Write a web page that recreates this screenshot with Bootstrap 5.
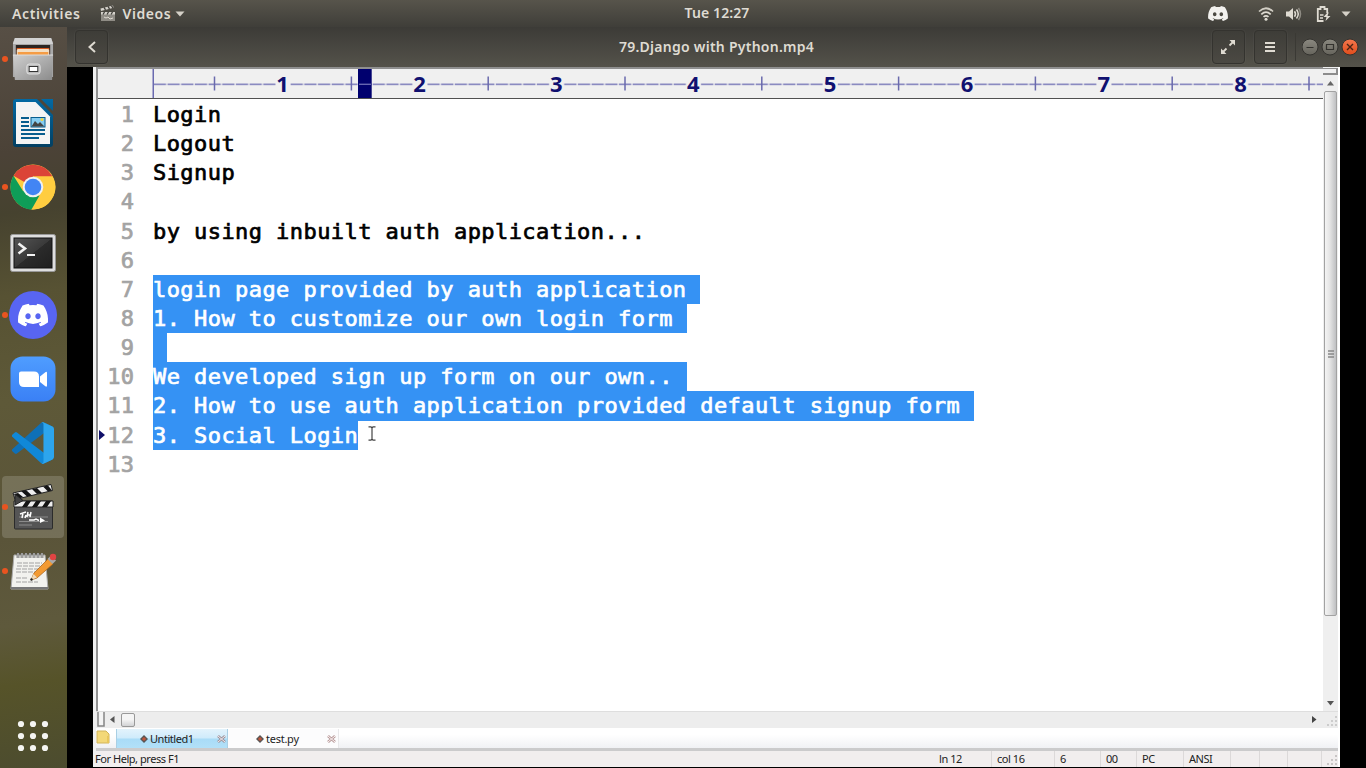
<!DOCTYPE html>
<html lang="en">
<head>
<meta charset="utf-8">
<meta name="viewport" content="width=device-width, initial-scale=1">
<title>Videos</title>
<link href="https://cdn.jsdelivr.net/npm/bootstrap@5.3.0/dist/css/bootstrap.min.css" rel="stylesheet">
<style>
body{font-family:"Noto Sans","Open Sans",sans-serif;background:#000;height:768px}
svg{display:block}
.topbar{height:27px;background:linear-gradient(#57544b,#3f3e39);color:#dfdbd2;font-size:14px;font-weight:600;line-height:27px}
.topbar .side{flex:1 1 0}
.topbar .wide{letter-spacing:.6px}
.topbar .clock{letter-spacing:.1px;padding-left:68px;line-height:26px}
.topbar .side:last-child{margin-left:0}
.dock{width:67px;background:linear-gradient(172deg,#574f45 0,#4b4237 17%,#46422f 25%,#575233 36%,#5e5938 50%,#5a5439 68%,#5e593c 80%,#565329 88%,#4c4c2f 100%)}
.dock-item{height:64px;width:67px;padding-right:2px}
.dock-item.running::before{content:"";position:absolute;left:2px;top:50%;width:6px;height:6px;margin-top:-3px;border-radius:50%;background:#e95420}
.dock-item.current .tile{background:rgba(255,255,255,.16);border-radius:4px}
.tile{width:62px;height:62px}
.headbar{height:40px;background:linear-gradient(#3c3b37,#54524a);color:#dfdbd2;font-size:14px;font-weight:600}
.head-title{letter-spacing:.26px;padding-bottom:1px}
.head-btn{width:33px;height:34px;padding:0;border:1px solid #34332f;border-radius:4px;background:linear-gradient(#3e3d38,#4b4943);box-shadow:0 0 0 1px rgba(255,255,255,.03)}
.head-sep{width:1px;height:28px;background:#3a3934}
.video{padding:0 26px 1px}
.editor{background:#fff;border-left:3px solid #f0f0f0;border-right:2px solid #fff}
.pane{border-left:2px solid #929292;border-top:2px solid #8f8f8f}
.ruler{height:30px;background:#f0f0f0;border-bottom:1px solid #505050}
.code{font-family:"DejaVu Sans Mono","Liberation Mono",monospace;font-size:22px;letter-spacing:.435px;-webkit-text-stroke:.7px;color:#000;padding-top:1px}
.code-line{height:29.15px;line-height:30.6px;white-space:pre}
.gutter{width:36.5px;margin-right:18.5px;text-align:right;color:#a3a3a3}
.sel{background:#3592f4;color:#fff;height:29.5px}
.vbar{width:15px;background:#efefef}
.splitter{height:7px;border:1px solid #8c8c8c;border-width:1px 2px 2px 0;background:#f0f0f0}
.vthumb{height:525px;margin-left:1px;width:13px;border:1px solid #a2a2a2;border-radius:2px;background:linear-gradient(90deg,#f4f4f4,#e4e4e4 45%,#bfc0c2)}
.hbar{height:18px;background:linear-gradient(#ededed 16px,#fff 16px);border-top:1px solid #dedede;padding-bottom:2px}
.hthumb{width:14px;height:14px;border:1px solid #999;border-radius:2px;background:linear-gradient(#f5f5f5 45%,#d2d3d5)}
.tabs{height:19px;background:linear-gradient(#fff 30%,#f0f1f4);font-size:11px;color:#222;line-height:19px}
.tab-a{width:112px;border:1px solid #a9cfe4;border-width:0 1px;background:linear-gradient(#e3f3fc 0,#cfebfb 48%,#a9dcf7 52%,#b2e0f8)}
.tab-b{width:111px;border-right:1px solid #e8e8ea;background:#fcfcfd}
.status{height:19px;border-top:3px solid #cbcbcc;background:#f1eeee;font-size:11px;line-height:16px;color:#222}
.status .cell{border-right:1px solid #dcd9d9;padding-left:5px;white-space:nowrap}
.snug{letter-spacing:-.45px}
.ibeam{left:270px;top:357px}
.rowmark{left:1px;top:361px}
</style>
</head>
<body class="d-flex flex-column overflow-hidden m-0">
<svg width="0" height="0" class="position-absolute" aria-hidden="true">
<defs>
<symbol id="discord" viewBox="0 0 127 96"><path d="M107.700 8.070A105.150 105.150 0 0 0 81.470 0a72.060 72.060 0 0 0-3.360 6.830 97.680 97.680 0 0 0-29.110 0A72.370 72.370 0 0 0 45.640 0a105.890 105.890 0 0 0-26.250 8.090C2.790 32.650-1.710 56.600.540 80.210a105.730 105.730 0 0 0 32.170 16.150 77.700 77.700 0 0 0 6.890-11.110 68.420 68.420 0 0 1-10.850-5.180c.910-.660 1.800-1.340 2.660-2a75.570 75.570 0 0 0 64.320 0c.870.710 1.760 1.390 2.660 2a68.680 68.680 0 0 1-10.870 5.190 77 77 0 0 0 6.890 11.100 105.250 105.250 0 0 0 32.190-16.140c2.640-27.380-4.510-51.110-18.900-72.150ZM42.450 65.690C36.180 65.690 31 60 31 53s5-12.740 11.430-12.740S54 46 53.890 53s-5.050 12.690-11.440 12.690Zm42.240 0C78.410 65.690 73.250 60 73.250 53s5-12.740 11.440-12.740S96.230 46 96.120 53s-5.040 12.690-11.430 12.690Z"/></symbol>
<linearGradient id="steel" x1="0" y1="0" x2="1" y2="1"><stop offset="0" stop-color="#cfcfcf"/><stop offset="1" stop-color="#8b8b8b"/></linearGradient>
<linearGradient id="term" x1="0" y1="0" x2="1" y2="1"><stop offset="0" stop-color="#555"/><stop offset=".5" stop-color="#3a3a3a"/><stop offset=".51" stop-color="#2b2b2b"/><stop offset="1" stop-color="#1f1f1f"/></linearGradient>
<linearGradient id="zm" x1="0" y1="0" x2="0" y2="1"><stop offset="0" stop-color="#4f9dff"/><stop offset="1" stop-color="#3a80f5"/></linearGradient>
<linearGradient id="wr" x1="0" y1="0" x2="0" y2="1"><stop offset="0" stop-color="#0369a3"/><stop offset="1" stop-color="#023f62"/></linearGradient>
<linearGradient id="wbtn" x1="0" y1="0" x2="0" y2="1"><stop offset="0" stop-color="#8b8980"/><stop offset="1" stop-color="#66645c"/></linearGradient>
<linearGradient id="cbtn" x1="0" y1="0" x2="0" y2="1"><stop offset="0" stop-color="#f5784e"/><stop offset="1" stop-color="#e04c1b"/></linearGradient>
<pattern id="dashes" width="13.68" height="30" patternUnits="userSpaceOnUse"><rect x=".8" y="14.500" width="12.300" height="1.700" fill="#8a8ac0"/></pattern>
</defs>
</svg>

<header class="topbar d-flex flex-shrink-0">
  <div class="side d-flex align-items-center">
    <span class="wide" style="margin-left:12px">Activities</span>
    <svg style="margin-left:20px" width="16" height="17" viewBox="0 0 16 17"><path d="M1 7h14v9H1z" fill="#8f8c85"/><path d="M1 7h14v2.500H1zM.5 3.500 13 .5l.6 2.200L1 6z" fill="#d5d2cb"/><path d="m4 2.300 1.500 2.500M8 1.300l1.500 2.500M11.500.8 13 3M3 9.500l1.500-2.500M7 9.500 8.500 7M11 9.500 12.500 7" stroke="#3f3e39" stroke-width="1.300"/><path d="M4 12l2 1 2-1 2 2 3-1" stroke="#dfdbd2" fill="none"/></svg>
    <span class="wide" style="margin-left:6px">Videos</span>
    <svg class="ms-1" width="10" height="6"><path d="M.5.500h9L5 5.500z" fill="#d5d1c8"/></svg>
  </div>
  <div class="clock">Tue 12:27</div>
  <div class="side d-flex align-items-center justify-content-end">
    <svg style="margin-right:30px" width="20" height="15" fill="#f2f1ee"><use href="#discord"/></svg>
    <svg style="margin-right:12px" width="16" height="14" viewBox="0 0 16 14" fill="none" stroke="#dfdbd2" stroke-width="1.700"><path d="M1 4.500q7-6.500 14 0" opacity=".9"/><path d="M3.300 7.300q4.700-4.400 9.400 0M5.500 9.900q2.500-2.200 5 0"/><circle cx="8" cy="12.200" r="1.500" fill="#dfdbd2" stroke="none"/></svg>
    <svg style="margin-right:14px" width="16" height="14" viewBox="0 0 16 14"><path d="M0 4.500h3L7 1v12L3 9.500H0z" fill="#dfdbd2"/><path d="M8.500 4.300q2 2.700 0 5.400M10.500 2.500q3.500 4.500 0 9" fill="none" stroke="#dfdbd2" stroke-width="1.500"/><path d="M12.500 1q4 6 0 12" fill="none" stroke="#8e8b83" stroke-width="1.500"/></svg>
    <svg style="margin-right:10px" width="15" height="16" viewBox="0 0 15 16"><path d="M7.500 15H1.800V3h2.700V1h4v2h2.700v4" fill="none" stroke="#dfdbd2" stroke-width="1.800"/><path d="M4 9h3.500M4 12h3" stroke="#dfdbd2" stroke-width="1.500"/><path d="m11.500 6.500-4 4.500h3l-1 4L14.500 10h-3l1.200-3.500z" fill="#dfdbd2"/></svg>
    <svg style="margin-right:15px" width="10" height="6"><path d="M.5.500h9L5 5.500z" fill="#d5d1c8"/></svg>
  </div>
</header>

<div class="d-flex flex-grow-1">
  <nav class="dock d-flex flex-column flex-shrink-0">
    <div class="dock-item running position-relative d-flex align-items-center justify-content-center"><svg width="42" height="46" viewBox="0 0 44 46" preserveAspectRatio="none"><path d="M3 2h38l2 5v34H1V7z" fill="#a9a9a9"/><path d="M3 2h38l2 6H1z" fill="#d2d2d2"/><path d="M4 9h36v12H4z" fill="#2c2522"/><path d="M5 12h34v9H5z" fill="#d85a20"/><path d="M5 14l1-1h32l1 1v7H5z" fill="#f3dfc4"/><path d="M6 16h32v5H6z" fill="#f59c44"/><path d="M1 19h42l-1 25H3z" fill="url(#steel)"/><path d="M1 19h42" stroke="#dedede"/><rect x="15.500" y="28" width="14" height="10" rx="2.500" fill="#bcbcbc" stroke="#e2e2e2"/><rect x="18" y="30.500" width="9" height="5" fill="#fff" stroke="#333"/></svg></div>
    <div class="dock-item d-flex align-items-center justify-content-center"><svg width="40" height="48" viewBox="0 0 40 48"><path d="M3 0h37v45q0 3-3 3H3q-3 0-3-3V3q0-3 3-3z" fill="url(#wr)"/><path d="M24 0h4l12 12v4z" fill="#4e4639"/><path d="M3 3h19.500L37 17.500V45H3z" fill="#f4f4f4"/><path d="M8 19h8M8 23h8M8 27h8M8 31h24M8 35h24M8 39h18" stroke="#075d8e" stroke-width="1.900"/><rect x="18" y="18.500" width="14" height="9.500" fill="#87cdf1" stroke="#075d8e"/><path d="M18.500 27.500 22 22l3 3 2-2 4.500 4.500z" fill="#444"/><circle cx="29" cy="20.500" r="1.500" fill="#eed33f"/></svg></div>
    <div class="dock-item running position-relative d-flex align-items-center justify-content-center"><svg width="46" height="46" viewBox="0 0 46 46"><circle cx="23" cy="23" r="22.500" fill="#ffcd40"/><path d="M23 23 3.500 11.700A22.500 22.500 0 0 1 42.500 12.500H23z" fill="#db4437"/><path d="M3.500 11.700A22.500 22.500 0 0 0 21.500 45.500L32 29 23 23 13 27z" fill="#0f9d58"/><path d="M42.500 12.500H23v21l-1.500 12A22.500 22.500 0 0 0 42.500 12.500z" fill="#ffcd40"/><path d="m21.500 45.500 10.500-17-9 4z" fill="#ffcd40"/><path d="m13.500 27 8 5.500h3l5-1-8 14z" fill="#0f9d58"/><circle cx="23" cy="23" r="10.300" fill="#f1f1f1"/><circle cx="23" cy="23" r="8.300" fill="#4285f4"/></svg></div>
    <div class="dock-item d-flex align-items-center justify-content-center pt-1"><svg width="46" height="38" viewBox="0 0 46 38"><rect x=".5" y=".5" width="45" height="37" rx="2" fill="#dedede" stroke="#999"/><rect x="4" y="4" width="38" height="30" fill="url(#term)" stroke="#111"/><path d="M8.500 9.500l6.500 5-6.500 5" fill="none" stroke="#f2f2f2" stroke-width="2.600"/><path d="M17 21h8" stroke="#f2f2f2" stroke-width="2"/></svg></div>
    <div class="dock-item running position-relative d-flex align-items-center justify-content-center"><svg width="48" height="48" viewBox="0 0 48 48"><circle cx="24" cy="24" r="24" fill="#5865f2"/><use href="#discord" x="9" y="12.500" width="30" height="23" fill="#fff"/></svg></div>
    <div class="dock-item d-flex align-items-center justify-content-center"><svg width="46" height="46" viewBox="0 0 46 46"><rect x=".5" y=".5" width="45" height="45" rx="12" fill="url(#zm)"/><path d="M11 15.500h13q5 0 5 5V31H14q-5 0-5-5v-8.500q0-2 2-2zM30 20.500l5-4q2-1.500 2 .5v12.500q0 2-2 .5l-5-4z" fill="#fff"/></svg></div>
    <div class="dock-item d-flex align-items-center justify-content-center"><svg width="42" height="42" viewBox="0 0 100 100"><path d="M96 11 75.900 1.100a6 6 0 0 0-7 1.200L1.400 64a4 4 0 0 0 0 6l5.400 4.900a4 4 0 0 0 5 .2L93 13.500c3-2 7 0 7 3.200" fill="#0f70b7"/><path d="M96 89 75.900 98.900a6 6 0 0 1-7-1.200L1.400 36a4 4 0 0 1 0-6l5.400-4.900a4 4 0 0 1 5-.2L93 86.500c3 2 7 0 7-3.200" fill="#1088d8"/><path d="M75.900 99a6 6 0 0 1-7-1.200c2 2.200 6 .6 6-2.500V4.700c0-3.100-4-4.700-6-2.500a6 6 0 0 1 7-1.200l20.600 10A6 6 0 0 1 100 16.500v67a6 6 0 0 1-3.500 5.500z" fill="#2da5ed"/></svg></div>
    <div class="dock-item running current position-relative d-flex align-items-center justify-content-center"><div class="tile d-flex align-items-center justify-content-center"><svg width="42" height="46" viewBox="0 0 42 46"><rect x="2.500" y="17" width="38" height="28" rx="1" fill="#555" stroke="#2b2b2b"/><path d="M2 17h39v6H2z" fill="#eee" stroke="#222"/><path d="m14 17-4 6h5l4-6zM24 17l-4 6h5l4-6zM34 17l-4 6h5l4-6z" fill="#151515"/><path d="M1 9 39 .5l1.500 6L3 15.500z" fill="#eee" stroke="#222"/><path d="m9 7 6 5.500 5-1L14 6zM20 5l5 5 5-1-5-5zM31 2.500l5 5 4-1-4-5zM2 10l4 5 5-2-5-4z" fill="#151515"/><path d="m3 10 8 6.500-8 4.500z" fill="#444" stroke="#222"/><path d="M7 33h29M7 37.500h29M7 41h13" stroke="#999" stroke-width=".8"/><path d="M8 30l6-2M11 29l-1 5M14 31l-1 3M16 28l-1 5M15 31h3M19 28l-1 5M17 36h5l2-1 3 1.500" stroke="#fff" stroke-width="1.500" fill="none"/><path d="M28 33.500v5.500l5-2.500z" fill="#fff"/></svg></div></div>
    <div class="dock-item running position-relative d-flex align-items-center justify-content-center"><svg width="48" height="38" viewBox="0 0 48 38"><path d="M5 3h31l3 34H2z" fill="#f2f2ee" stroke="#aaa"/><path d="M2 35h37v2H2z" fill="#777"/><path d="M8 11h25M8 14h25M7 17h26M7 20h20M7 26h12M7 30h22" stroke="#999" stroke-width=".9" stroke-dasharray="5 1"/><path d="M9 6V1M13 6V1M17 6V1M21 6V1M25 6V1M29 6V1M33 6V1" stroke="#555" stroke-width="2.600"/><path d="M9 6V1M13 6V1M17 6V1M21 6V1M25 6V1M29 6V1M33 6V1" stroke="#e6e6e6" stroke-width="1"/><path d="m22 28 3-7L39 7l5 5-16 14z" fill="#f39a32" stroke="#a35f16" stroke-width=".7"/><path d="m22 28 2.500-6 3.500 3.500z" fill="#eedaba"/><path d="m38.500 7 3.500-3.500 5 5-3.500 3.500z" fill="#aaa"/><circle cx="44" cy="5" r="3.200" fill="#e04443"/><circle cx="22.500" cy="27.500" r="1.200" fill="#222"/></svg></div>
    <div class="dock-item mt-auto d-flex align-items-center justify-content-center"><svg width="32" height="32" fill="#f5f5f2"><circle cx="4" cy="4" r="3.100"/><circle cx="16" cy="4" r="3.100"/><circle cx="28" cy="4" r="3.100"/><circle cx="4" cy="16" r="3.100"/><circle cx="16" cy="16" r="3.100"/><circle cx="28" cy="16" r="3.100"/><circle cx="4" cy="28" r="3.100"/><circle cx="16" cy="28" r="3.100"/><circle cx="28" cy="28" r="3.100"/></svg></div>
  </nav>

  <main class="d-flex flex-column flex-grow-1">
    <div class="headbar d-flex align-items-center justify-content-between flex-shrink-0">
      <div style="width:300px;padding-left:8px"><button class="head-btn btn d-flex align-items-center justify-content-center" aria-label="Back"><svg width="8" height="12"><path d="M7 1 1.500 6 7 11" fill="none" stroke="#dfdbd2" stroke-width="2"/></svg></button></div>
      <div class="head-title">79.Django with Python.mp4</div>
      <div class="d-flex align-items-center justify-content-end" style="width:300px;padding-right:7px">
        <button class="head-btn btn d-flex align-items-center justify-content-center" aria-label="Fullscreen"><svg width="14" height="14"><path d="M8.500 5.500 12 2M5.500 8.500 2 12" stroke="#dfdbd2" stroke-width="1.800"/><path d="M8.500 0H14v5.500zM0 8.500V14h5.500z" fill="#dfdbd2"/></svg></button>
        <button class="head-btn btn d-flex align-items-center justify-content-center" style="margin-left:9px" aria-label="Menu"><svg width="10" height="10"><path d="M0 1h10M0 5h10M0 9h10" stroke="#dfdbd2" stroke-width="1.900"/></svg></button>
        <span class="head-sep" style="margin:0 6px 0 8px"></span>
        <svg width="57" height="18" viewBox="0 0 57 18"><g stroke="#34332f"><circle cx="8" cy="9" r="8" fill="url(#wbtn)"/><circle cx="28" cy="9" r="8" fill="url(#wbtn)"/><circle cx="48" cy="9" r="8" fill="url(#cbtn)"/></g><path d="M4.500 9.500h7M24.500 6.500h7v5h-7z" stroke="#33322e" stroke-width="1.200" fill="none"/><path d="m45 6 6 6m0-6-6 6" stroke="#4a2415" stroke-width="1.400"/></svg>
      </div>
    </div>

    <section class="video flex-grow-1 d-flex">
      <div class="editor flex-grow-1 d-flex flex-column">
        <div class="flex-grow-1 d-flex">
          <div class="pane flex-grow-1 position-relative d-flex flex-column">
            <div class="ruler overflow-hidden">
              <svg width="1225" height="30" font-family="'Noto Sans','Open Sans',sans-serif" font-size="22" font-weight="700" fill="#101070" text-anchor="middle">
                <g transform="translate(55 0)"><rect width="1170" height="30" fill="url(#dashes)"/><rect x="-.5" width="1.500" height="30" fill="#6a6ab0"/>
                <path d="M61.500 7.500v14M198.400 7.500v14M335.200 7.500v14M472 7.500v14M608.800 7.500v14M745.600 7.500v14M882.400 7.500v14M1019.200 7.500v14M1156 7.500v14" stroke="#6a6aad" stroke-width="1.500"/>
                <g fill="#f0f0f0"><path d="M123 5h14v20h-14zM260 5h14v20h-14zM396.500 5h14v20h-14zM533.500 5h14v20h-14zM670 5h14v20h-14zM807 5h14v20h-14zM944 5h14v20h-14zM1080.500 5h14v20h-14z"/></g>
                <text x="129.500" y="22.500">1</text><text x="266.500" y="22.500">2</text><text x="403.300" y="22.500">3</text><text x="540.200" y="22.500">4</text><text x="677" y="22.500">5</text><text x="814" y="22.500">6</text><text x="950.800" y="22.500">7</text><text x="1087.600" y="22.500">8</text>
                <rect x="205" width="13.700" height="30" fill="#00006e"/><path d="M206 15.300h12" stroke="#6565b0" stroke-width="1.400"/></g>
              </svg>
            </div>
            <div class="code flex-grow-1">
              <div class="code-line d-flex"><span class="gutter">1</span><span>Login</span></div>
              <div class="code-line d-flex"><span class="gutter">2</span><span>Logout</span></div>
              <div class="code-line d-flex"><span class="gutter">3</span><span>Signup</span></div>
              <div class="code-line d-flex"><span class="gutter">4</span></div>
              <div class="code-line d-flex"><span class="gutter">5</span><span>by using inbuilt auth application...</span></div>
              <div class="code-line d-flex"><span class="gutter">6</span></div>
              <div class="code-line d-flex"><span class="gutter">7</span><span class="sel">login page provided by auth application </span></div>
              <div class="code-line d-flex"><span class="gutter">8</span><span class="sel">1. How to customize our own login form </span></div>
              <div class="code-line d-flex"><span class="gutter">9</span><span class="sel"> </span></div>
              <div class="code-line d-flex"><span class="gutter">10</span><span class="sel">We developed sign up form on our own.. </span></div>
              <div class="code-line d-flex"><span class="gutter">11</span><span class="sel">2. How to use auth application provided default signup form </span></div>
              <div class="code-line d-flex"><span class="gutter">12</span><span class="sel">3. Social Login</span></div>
              <div class="code-line d-flex"><span class="gutter">13</span></div>
            </div>
            <svg class="rowmark position-absolute" width="6" height="10"><path d="M0 0 6 5 0 10z" fill="#10106a"/></svg>
            <svg class="ibeam position-absolute" width="8" height="15"><path d="M.5.800h2.500L4 2l1-1.200h2.500M.5 14.200H3L4 13l1 1.200h2.500M4 2v11" fill="none" stroke="#444" stroke-width="1.200"/></svg>
          </div>
          <div class="vbar d-flex flex-column">
            <div class="splitter" style="margin-top:1px;margin-bottom:6px"></div>
            <svg width="7" height="5" class="ms-1" style="margin-bottom:5px"><path d="M3.500 0 7 4.500H0z" fill="#666"/></svg>
            <div class="vthumb d-flex align-items-center justify-content-center"><svg width="6" height="8"><path d="M0 1h6M0 4h6M0 7h6" stroke="#888" stroke-width="1.300"/></svg></div>
            <svg width="7" height="5" class="ms-1 mt-auto" style="margin-bottom:5px"><path d="M0 0h7L3.500 4.500z" fill="#555"/></svg>
          </div>
        </div>
        <div class="hbar d-flex align-items-center flex-shrink-0">
          <svg width="9" height="15"><path d="M2 0v14h6V0" fill="#f4f4f4" stroke="#858585" stroke-width="1.500"/></svg>
          <svg width="5" height="7" style="margin-left:5px;margin-right:6px"><path d="M4.500 0v7L0 3.500z" fill="#555"/></svg>
          <div class="hthumb"></div>
          <svg width="5" height="7" class="ms-auto" style="margin-right:8px"><path d="M0 0v7l4.500-3.500z" fill="#444"/></svg>
          <svg width="13" height="14" fill="#ccc"><path d="M10 3h2v2h-2zM10 7h2v2h-2zM10 11h2v2h-2zM6 7h2v2H6zM6 11h2v2H6zM2 11h2v2H2z"/></svg>
        </div>
        <div class="tabs d-flex flex-shrink-0">
          <svg width="20" height="19"><path d="M1 2h9l3 3v9H1z" fill="#f3d878" stroke="#d1b45a"/><path d="M11 7h2v7h-2z" fill="#e8c65c"/></svg>
          <div class="tab-a d-flex align-items-center"><svg style="margin-left:23px" width="8" height="8"><path d="M4 0 8 4 4 8 0 4z" fill="#555"/><circle cx="4" cy="4" r="1.800" fill="#c0563c"/></svg><span class="snug" style="margin-left:2px">Untitled1</span><svg class="ms-auto" style="margin-right:1px" width="9" height="8"><path d="m1 1 7 6m0-6L1 7" stroke="#9b939b" stroke-width="2.600"/><path d="m1 1 7 6m0-6L1 7" stroke="#f3e9ee" stroke-width="1"/></svg></div>
          <div class="tab-b d-flex align-items-center"><svg style="margin-left:28px" width="8" height="8"><path d="M4 0 8 4 4 8 0 4z" fill="#555"/><circle cx="4" cy="4" r="1.800" fill="#c0563c"/></svg><span class="snug" style="margin-left:2px;letter-spacing:-.25px">test.py</span><svg class="ms-auto" style="margin-right:2px" width="9" height="8"><path d="m1 1 7 6m0-6L1 7" stroke="#b79a9a" stroke-width="2.600"/><path d="m1 1 7 6m0-6L1 7" stroke="#fdf3f3" stroke-width="1"/></svg></div>
        </div>
        <div class="status d-flex flex-shrink-0 snug">
          <div class="flex-grow-1"><span style="margin-left:-1px">For Help, press F1</span></div>
          <div class="cell" style="width:58px">ln 12</div><div class="cell" style="width:63px">col 16</div><div class="cell" style="width:46px">6</div><div class="cell" style="width:36px">00</div><div class="cell" style="width:47px">PC</div><div class="cell" style="width:47px">ANSI</div><div class="cell" style="width:29px"></div><div class="cell" style="width:28px"></div><div class="cell" style="width:34px"></div>
          <svg width="16" height="15" fill="#c8c5c5"><path d="M13 4h2v2h-2zM13 8h2v2h-2zM13 12h2v2h-2zM9 8h2v2H9zM9 12h2v2H9zM5 12h2v2H5z"/></svg>
        </div>
      </div>
    </section>
  </main>
</div>
<script src="https://cdn.jsdelivr.net/npm/bootstrap@5.3.0/dist/js/bootstrap.bundle.min.js"></script>
</body>
</html>
